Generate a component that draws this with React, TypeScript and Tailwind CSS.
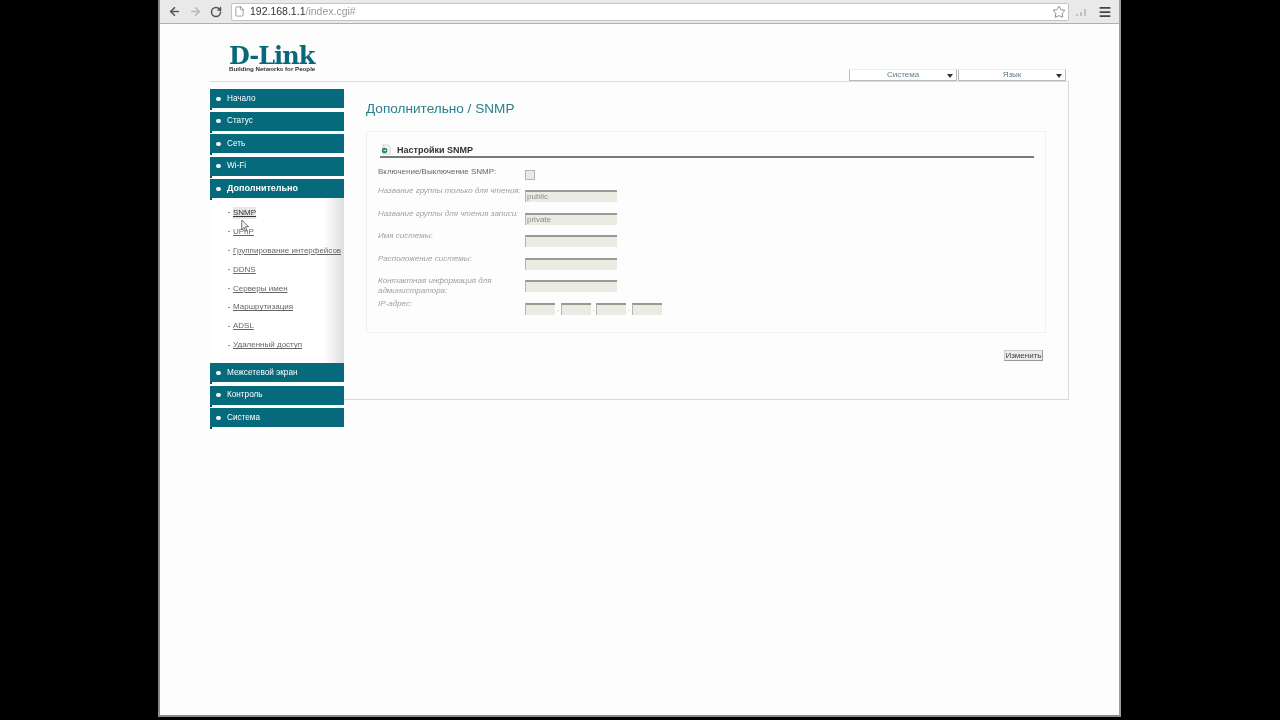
import { ArrowLeft, ArrowRight, RotateCw, File, Star, Menu } from 'lucide-react';

const topMenu = ['Начало', 'Статус', 'Сеть', 'Wi-Fi'];
const subMenu = ['SNMP', 'UPnP', 'Группирование интерфейсов', 'DDNS', 'Серверы имен', 'Маршрутизация', 'ADSL', 'Удаленный доступ'];
const bottomMenu = ['Межсетевой экран', 'Контроль', 'Система'];

function MenuBar({ label, active }: { label: string; active?: boolean }) {
  return (
    <div className="relative flex items-center h-[19px] shrink-0 bg-[#056b7c] pl-[6px] text-white text-[8.2px]">
      <span className="w-[5px] h-[4px] rounded-full bg-[#eef6f6] mr-[6px]" />
      <span className={active ? 'font-bold text-[9px]' : 'font-medium pt-[1px]'}>{label}</span>
      <span className="absolute left-0 top-full w-[2px] h-[2px] bg-[#04505d]" />
    </div>
  );
}

function Dropdown({ label }: { label: string }) {
  return (
    <div className="relative w-[108px] h-[12px] flex items-center justify-center bg-white border-x border-b border-t border-x-[#bbbbbb] border-b-[#bbbbbb] border-t-[#ececec] text-[8px] text-[#5b8289]">
      {label}
      <span className="absolute right-[3px] top-[4px] w-0 h-0 border-x-[3px] border-x-transparent border-t-[4px] border-t-[#333333]" />
    </div>
  );
}

function Input({ value, width = 'w-[92px]' }: { value?: string; width?: string }) {
  return (
    <div className={`${width} h-[12px] bg-[#ecebe3] border-t-2 border-l border-t-[#9a9a95] border-l-[#b5b5ae] text-[8px] leading-[9px] text-[#8a8a85] pl-[1px]`}>
      {value}
    </div>
  );
}

function Row({ label, children }: { label: string; children: React.ReactNode }) {
  return (
    <div className="flex items-start h-[22.5px] shrink-0">
      <div className="w-[147px] pr-[4px] text-[8px] leading-[9.5px] pt-[2px] italic text-[#a0a0a0]">{label}</div>
      <div className="flex items-center pt-[6px]">{children}</div>
    </div>
  );
}

function Dot() {
  return <span className="w-[5.5px] text-center text-[8px] leading-[12px] text-[#999999]">.</span>;
}

export default function App() {
  return (
    <div className="w-[1280px] h-[720px] overflow-hidden bg-black font-['Liberation_Sans',sans-serif]">
      <div className="ml-[158px] w-[963px] h-[717px] flex flex-col bg-[#fdfdfd] border-l-2 border-r-2 border-b-2 border-l-[#8a8a8a] border-r-[#a59a9e] border-b-[#8c8c8c] blur-[0.4px]">
        {/* Browser toolbar */}
        <div className="h-[24px] shrink-0 flex items-center bg-[#e9e9e9] border-b border-[#b0b0b0] pl-[8px] pr-[7px]">
          <ArrowLeft className="w-[13px] h-[13px] text-[#555555]" strokeWidth={3} />
          <ArrowRight className="w-[13px] h-[13px] ml-[8px] text-[#b8b8b8]" strokeWidth={3} />
          <RotateCw className="w-[12px] h-[12px] ml-[8px] text-[#555555]" strokeWidth={3} />
          <div className="flex items-center flex-1 h-[18px] ml-[9px] bg-white border border-[#c4c4c4] rounded-[2px] pl-[2px] pr-[2px]">
            <File className="w-[11px] h-[11px] text-[#777777]" strokeWidth={1.5} />
            <span className="ml-[5px] text-[10.5px] text-[#333333]">192.168.1.1</span>
            <span className="text-[10.5px] text-[#999999]">/index.cgi#</span>
            <Star className="w-[14px] h-[14px] ml-auto text-[#777777]" strokeWidth={1.5} />
          </div>
          <svg viewBox="0 0 12 8" className="w-[12px] h-[8px] ml-[6px]">
            <path d="M1 8V6h2v2zM5 8V4h2v4zM9 8V1h2v7z" fill="#c2c2c2" />
          </svg>
          <Menu className="w-[14px] h-[14px] ml-[11px] text-[#444444]" strokeWidth={3} />
        </div>

        {/* Header */}
        <div className="h-[57px] shrink-0 flex justify-between pl-[69px] pr-[53px]">
          <div className="pt-[20px]">
            <div className="font-['DejaVu_Serif',serif] font-bold text-[24px] leading-[23px] tracking-[-1px] text-[#07687a]">D-Link</div>
            <div className="-mt-[2px] text-[6.2px] leading-[7px] font-bold text-[#333333]">Building Networks for People</div>
          </div>
          <div className="flex items-end gap-[1px]">
            <Dropdown label="Система" />
            <Dropdown label="Язык" />
          </div>
        </div>

        {/* Sidebar + content */}
        <div className="relative ml-[50px] w-[859px] flex border-t border-[#dddddd]">
          <div className="w-[134px] shrink-0 pt-[7px] flex flex-col">
            <div className="flex flex-col gap-[3.5px]">
              {topMenu.map((item) => (
                <MenuBar key={item} label={item} />
              ))}
              <MenuBar label="Дополнительно" active />
            </div>
            <div className="h-[165px] pt-[5.5px] bg-linear-to-r from-white from-85% to-[#dedede]">
              {subMenu.map((item, i) => (
                <div key={item} className="flex items-center h-[18.9px] pl-[18px] text-[8px] whitespace-nowrap">
                  <span className="w-[2px] h-[1px] shrink-0 bg-[#999999] mr-[3px]" />
                  <span className={i === 0 ? 'underline text-[#333333] font-medium bg-[#e6e6e6]' : 'underline text-[#666666]'}>{item}</span>
                </div>
              ))}
            </div>
            <div className="flex flex-col gap-[3.5px]">
              {bottomMenu.map((item) => (
                <MenuBar key={item} label={item} />
              ))}
            </div>
          </div>

          <div className="flex-1 h-[318px] pl-[22px] pr-[22px] border-r border-b border-[#d8d8d8]">
            <h1 className="mt-[17px] h-[20px] text-[13.6px] leading-[20px] text-[#2b7f8c]">Дополнительно / SNMP</h1>
            <div className="mt-[12px] h-[202px] w-[680px] border border-[#f0f0f0]">
              <div className="flex items-center h-[27px] mt-[-1px] ml-[13px] mr-[11px] border-b-2 border-[#77797a]">
                <svg viewBox="0 0 12 12" className="w-[11px] h-[11px] mt-[12px]">
                  <path d="M3 1h6l2 2v8H3z" fill="#f4f4f4" stroke="#c0c0c0" strokeWidth="0.7" />
                  <circle cx="5" cy="7" r="3" fill="#1b8a5a" />
                  <path d="M3.5 7h3M5.5 6l1 1-1 1" stroke="#ffffff" strokeWidth="0.8" fill="none" />
                </svg>
                <span className="ml-[6px] mt-[14px] text-[9px] font-bold text-[#333333]">Настройки SNMP</span>
              </div>
              <div className="pl-[11px] pt-[7px] flex flex-col">
                <div className="flex items-start h-[19px] shrink-0">
                  <div className="w-[147px] mt-[1px] text-[8px] leading-[12px] text-[#666666]">Включение/Выключение SNMP:</div>
                  <div className="mt-[5px] w-[10px] h-[10px] bg-[#e8e8e8] border border-[#b5b5b5]" />
                </div>
                <Row label="Название группы только для чтения:"><Input value="public" /></Row>
                <Row label="Название группы для чтения записи:"><Input value="private" /></Row>
                <Row label="Имя системы:"><Input /></Row>
                <Row label="Расположение системы:"><Input /></Row>
                <Row label="Контактная информация для администратора:"><Input /></Row>
                <Row label="IP-адрес:">
                  <Input width="w-[30px]" />
                  <Dot />
                  <Input width="w-[30px]" />
                  <Dot />
                  <Input width="w-[30px]" />
                  <Dot />
                  <Input width="w-[30px]" />
                </Row>
              </div>
            </div>
            <div className="flex justify-end mt-[17px] mr-[3px]">
              <button className="w-[39px] h-[11px] bg-[#ececec] border border-[#c8c8c8] border-r-[#999999] border-b-[#999999] text-[8px] leading-[9px] text-[#444444]">
                Изменить
              </button>
            </div>
          </div>

          {/* Mouse cursor */}
          <svg viewBox="0 0 12 18" className="absolute left-[31px] top-[137px] w-[9px] h-[14px]">
            <path d="M1 1v13l3-3 2 5 2-1-2-5h4z" fill="#f4f4f4" stroke="#444444" strokeWidth="1" />
          </svg>
        </div>
      </div>
    </div>
  );
}
